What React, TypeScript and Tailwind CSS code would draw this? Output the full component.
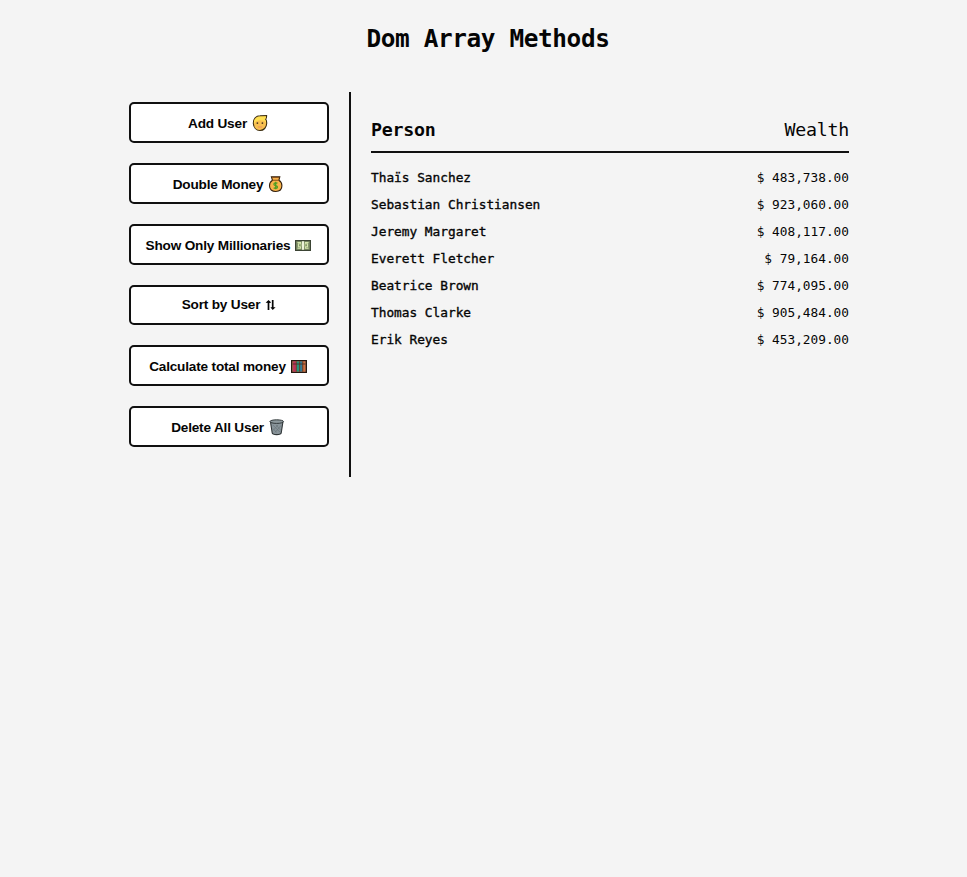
import React from "react";

const AddUserIcon = () => (
  <svg className="h-[18px] w-4 shrink-0" viewBox="0 0 16 18">
    <path d="M1.300 8.200C1.300 3.700 4 .9 8 .9L14.600 .6C14.700 2.200 14.300 3.300 13.700 4.300C14.500 5.500 14.800 6.800 14.700 8.500C14.500 12.500 11.800 15.500 8 15.500S1.500 12.500 1.300 8.200z" fill="#f8c050" stroke="#3a2c10" strokeWidth="1.100" />
    <path d="M1.900 8.500C1.700 4.300 4.300 1.500 8 1.500L14 1.300C14 2.700 13.500 3.700 12.800 4.500C13.600 5.500 14 6.600 14 8L12 5.800 8 5.300 4 6.200z" fill="#ffe052" />
    <circle cx="5.400" cy="8.100" r=".9" fill="#49311a" />
    <circle cx="10.400" cy="8.100" r=".9" fill="#49311a" />
    <path d="M5.800 12h4.400" fill="none" stroke="#ee9560" strokeWidth="1.200" />
  </svg>
);

const MoneyBagIcon = () => (
  <svg className="h-[18px] w-4 shrink-0" viewBox="0 0 16 18">
    <path d="M3.400.8h8.400l-.9 3.500c2 1.200 3 3 3 5.500 0 3.700-2.500 5.700-6.200 5.700s-6.200-2-6.200-5.700c0-2.500 1-4.300 3-5.500z" fill="#f9b34b" stroke="#33200d" strokeWidth="1.100" />
    <path d="M4 1.500h7.300M4.500 4.200h6.300" stroke="#8c531c" strokeWidth="1.100" />
    <path d="M9.500 7.300c-.8-.7-3.600-.9-3.600.9 0 1.900 3.600.8 3.600 2.800 0 1.800-2.800 1.700-3.800.8M7.700 5.700v7.600" fill="none" stroke="#4a9e22" strokeWidth="1.200" />
  </svg>
);

const BanknoteIcon = () => (
  <svg className="h-[18px] w-4 shrink-0" viewBox="0 0 16 18">
    <rect x=".6" y="3.600" width="14.800" height="9.800" fill="#819169" stroke="#3b4434" strokeWidth="1.200" />
    <path d="M2.500 5.500h3v1.300h-2v3h2v1.400h-3M13.500 5.500h-3v1.300h2v3h-2v1.400h3" fill="none" stroke="#d5e6ad" strokeWidth="1.100" />
    <path d="M7 4.200h2v8.600H7z" fill="#edf3da" />
    <path d="M6 6.500v3M10 6.500v3" stroke="#b5ca91" />
  </svg>
);

const SortIcon = () => (
  <svg className="h-[14px] w-[11px] shrink-0" viewBox="0 0 11 14">
    <path d="M3.500 12V3.500M7.700 2v8.500" fill="none" stroke="#050505" strokeWidth="1.700" />
    <path d="M.6 4.800 3.500 1.900 5.700 4.100V4.900zM5.400 9.200 7.700 12.100 10.600 9.200z" fill="#050505" />
  </svg>
);

const AbacusIcon = () => (
  <svg className="h-[18px] w-4 shrink-0" viewBox="0 0 16 18">
    <rect x=".6" y="2.600" width="14.800" height="11.800" fill="#a36b4d" stroke="#251710" strokeWidth="1.200" />
    <path d="M3.500 3.500v10" stroke="#c02d5c" strokeWidth="2.500" />
    <path d="M7 3.500v10" stroke="#23967c" strokeWidth="2.400" />
    <path d="M10 3.500v10" stroke="#28809e" strokeWidth="1.800" />
    <path d="M13.200 3.500v10" stroke="#d66e3c" strokeWidth="1.600" />
    <path d="M1.500 6h13" stroke="#493026" strokeWidth=".9" />
    <path d="M5.300 3.500v10M8.600 3.500v10M11.700 3.500v10" stroke="#493026" strokeWidth=".7" />
  </svg>
);

const TrashIcon = () => (
  <svg className="h-[18px] w-4 shrink-0" viewBox="0 0 16 18">
    <path d="m1.500 3 1.700 10.900c.2 1.200 1.500 1.700 4.500 1.700s4.300-.5 4.500-1.700L13.900 3z" fill="#89949a" stroke="#303638" strokeWidth="1.100" />
    <ellipse cx="7.700" cy="2.600" rx="6.800" ry="1.800" fill="#8e999d" stroke="#343b3d" />
    <path d="m3.800 6 7 7M7 6l5 5.500M4 9.500l3.500 4M12 6.500l-6 7M9 6l-5 5.500" stroke="#6a767a" strokeWidth=".7" />
  </svg>
);

type Action = { label: string; icon: React.ReactNode; height: string; inset: string };

const actions: Action[] = [
  { label: "Add User", icon: <AddUserIcon />, height: "h-[41px]", inset: "pt-[2px] pr-[2px]" },
  { label: "Double Money", icon: <MoneyBagIcon />, height: "h-[41px]", inset: "pt-[2px] pr-[1px]" },
  { label: "Show Only Millionaries", icon: <BanknoteIcon />, height: "h-[41px]", inset: "pt-[2px] pr-[1px]" },
  { label: "Sort by User", icon: <SortIcon />, height: "h-[40px]", inset: "pb-[1px]" },
  { label: "Calculate total money", icon: <AbacusIcon />, height: "h-[41px]", inset: "pt-[2px] pr-[2px]" },
  { label: "Delete All User", icon: <TrashIcon />, height: "h-[41px]", inset: "pt-[2px] pr-[2px]" },
];

const people = [
  ["Thaïs Sanchez", "$ 483,738.00"],
  ["Sebastian Christiansen", "$ 923,060.00"],
  ["Jeremy Margaret", "$ 408,117.00"],
  ["Everett Fletcher", "$ 79,164.00"],
  ["Beatrice Brown", "$ 774,095.00"],
  ["Thomas Clarke", "$ 905,484.00"],
  ["Erik Reyes", "$ 453,209.00"],
];

export default function App() {
  return (
    <div className="min-h-screen bg-[#f4f4f4] pl-[129px] font-['DejaVu_Sans_Mono',monospace] text-[#050505]">
      <div className="w-[720px]">
        <h1 className="h-[92px] pt-[21px] pr-[2px] text-center text-[24.4px] leading-[36px] font-bold tracking-[-0.39px]">Dom Array Methods</h1>
        <main className="flex h-[385px]">
          <aside className="flex w-[222px] shrink-0 flex-col gap-5 border-r-2 border-[#101010] pt-[10px] pr-5">
            {actions.map(({ label, icon, height, inset }) => (
              <button
                key={label}
                className={`flex w-[200px] shrink-0 items-center justify-center gap-[5px] rounded-[5px] border-2 border-[#101010] bg-white font-['Liberation_Sans',sans-serif] text-[13.6px] leading-[18px] font-bold tracking-[-0.18px] ${height} ${inset}`}
              >
                <span className="whitespace-nowrap">{label}</span>
                {icon}
              </button>
            ))}
          </aside>
          <section className="ml-5 w-[478px]">
            <h2 className="flex h-[61px] items-start justify-between border-b-2 border-[#101010] pt-[24px] text-[18.3px] leading-[28px] tracking-[-0.24px]">
              <strong>Person</strong>
              <span>Wealth</span>
            </h2>
            <div className="pt-[11px] text-[12.79px] leading-[27px]">
              {people.map(([name, wealth]) => (
                <div key={name} className="flex h-[27px] justify-between">
                  <span className="[-webkit-text-stroke:0.35px_#050505]">{name}</span>
                  <span>{wealth}</span>
                </div>
              ))}
            </div>
          </section>
        </main>
      </div>
    </div>
  );
}
